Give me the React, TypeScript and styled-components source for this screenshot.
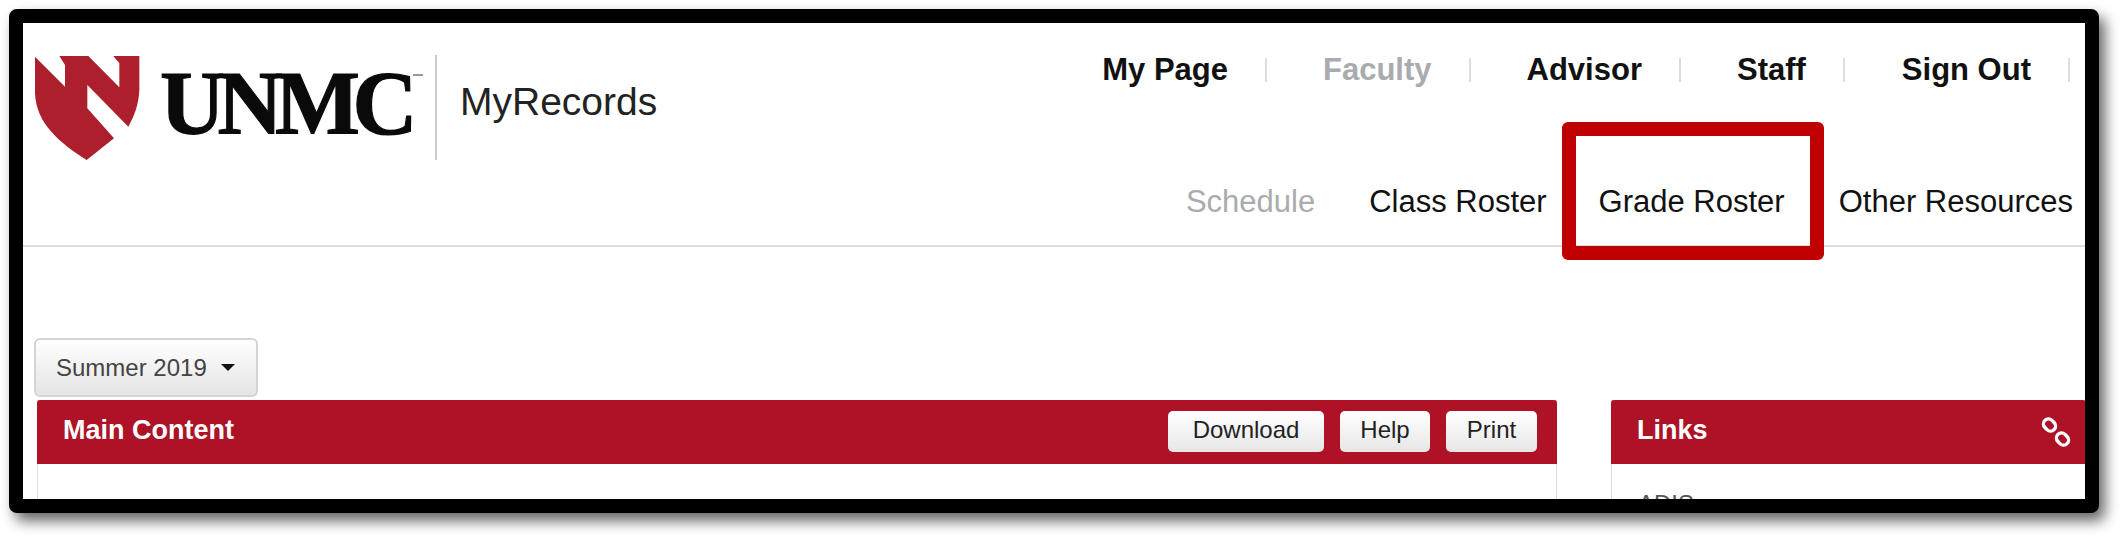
import React from 'react'
import styled, { createGlobalStyle } from 'styled-components'

const Global = createGlobalStyle`
  html, body {
    margin: 0;
    background: #fff;
    font-family: "Liberation Sans", Arial, sans-serif;
  }
`

const Page = styled.div`
  width: 2128px;
  height: 542px;
  padding: 9px 0 0 9px;
  box-sizing: border-box;
  overflow: hidden;
`

const Frame = styled.div`
  position: relative;
  width: 2090px;
  height: 504px;
  box-sizing: border-box;
  border: 14px solid #000;
  border-radius: 8px;
  box-shadow: 6px 8px 14px rgba(0, 0, 0, 0.6);
  background: #fff;
`

const Clip = styled.div`
  width: 100%;
  height: 100%;
  overflow: hidden;
`

const Header = styled.header`
  height: 222px;
  display: flex;
  justify-content: space-between;
  border-bottom: 2px solid #ddd;
`

const Brand = styled.div`
  display: flex;
  align-items: flex-start;
  padding: 27px 0 0 7px;
`

const Shield = styled.svg`
  width: 115px;
  height: 115px;
  flex: none;
`

const Wordmark = styled.div`
  font-family: "Liberation Serif", serif;
  font-weight: 700;
  font-size: 90px;
  line-height: 90px;
  letter-spacing: -7.5px;
  -webkit-text-stroke: 1.2px #0a0a0a;
  color: #0a0a0a;
  margin: 9px 0 0 15px;
  width: 252px;
`

const Tm = styled.span`
  display: inline-block;
  width: 10px;
  height: 2px;
  background: #999;
  margin: 24px 0 0 1px;
  flex: none;
`

const BrandDivider = styled.div`
  width: 2px;
  height: 105px;
  background: #ccc;
  margin: 5px 0 0 12px;
`

const AppName = styled.div`
  font-size: 39px;
  line-height: 40px;
  color: #222;
  margin: 32px 0 0 23px;
`

const Navs = styled.div`
  display: flex;
  flex-direction: column;
  align-items: flex-end;
`

const TopNav = styled.nav`
  display: flex;
  align-items: center;
  height: 32px;
  margin-top: 31px;
`

const TopLink = styled.a<{ $muted?: boolean }>`
  font-size: 31px;
  font-weight: 700;
  line-height: 32px;
  color: ${({ $muted }) => ($muted ? '#a9abae' : '#111')};
`

const TopSep = styled.span<{ $gap: number }>`
  width: 2px;
  height: 24px;
  background: #ddd;
  margin: 0 ${({ $gap }) => $gap}px 0 37px;
`

const SubNav = styled.nav`
  display: flex;
  align-items: center;
  height: 36px;
  margin: 98px 12px 0 0;
`

const SubLink = styled.a<{ $muted?: boolean; $gap: number }>`
  font-size: 31px;
  line-height: 36px;
  margin-left: ${({ $gap }) => $gap}px;
  color: ${({ $muted }) => ($muted ? '#a9abae' : '#111')};
`

const Highlight = styled.div`
  position: absolute;
  left: 1539px;
  top: 99px;
  width: 262px;
  height: 138px;
  box-sizing: border-box;
  border: 14px solid #c00000;
  border-radius: 6px;
`

const Body = styled.div`
  padding: 91px 0 0 11px;
`

const TermButton = styled.button`
  display: flex;
  align-items: center;
  width: 224px;
  height: 59px;
  padding: 0 0 0 20px;
  box-sizing: border-box;
  border: 2px solid #d4d4d4;
  border-radius: 6px;
  background: linear-gradient(#fff, #e4e4e4);
  font-family: inherit;
  font-size: 24px;
  color: #444;
`

const Caret = styled.span`
  margin-left: 14px;
  border: 7px solid transparent;
  border-top: 7px solid #111;
  border-bottom: 0;
`

const Columns = styled.div`
  display: flex;
  margin: 3px 0 0 3px;
`

const Panel = styled.section<{ $width: number; $gap?: number }>`
  flex: none;
  width: ${({ $width }) => $width}px;
  margin-left: ${({ $gap }) => $gap ?? 0}px;
  box-sizing: border-box;
  border-left: 1px solid #ddd;
  border-right: 1px solid #ddd;
  height: 200px;
`

const PanelHead = styled.div<{ $right: number }>`
  display: flex;
  align-items: center;
  justify-content: space-between;
  height: 64px;
  margin: 0 -1px;
  padding: 0 ${({ $right }) => $right}px 0 26px;
  box-sizing: border-box;
  background: #ae1227;
  border-radius: 3px 3px 0 0;
  color: #fff;
`

const PanelTitle = styled.h2`
  margin: 0 0 4px;
  font-size: 27px;
  font-weight: 700;
`

const Actions = styled.div`
  display: flex;
  gap: 16px;
  margin-bottom: 2px;
`

const ActionButton = styled.button<{ $width: number }>`
  width: ${({ $width }) => $width}px;
  height: 41px;
  padding: 0 0 2px;
  border: 0;
  border-radius: 5px;
  background: linear-gradient(#fff, #e6e6e6);
  font-family: inherit;
  font-size: 24px;
  color: #222;
`

const LinkItem = styled.div`
  font-size: 24px;
  line-height: 28px;
  color: #555;
  margin: 26px 0 0 26px;
`

const Chain = styled.svg`
  width: 30px;
  height: 30px;
  margin-bottom: 1px;
`

export default function App() {
  return (
    <Page>
      <Global />
      <Frame>
        <Clip>
          <Header>
            <Brand>
              <Shield viewBox="0 0 345 345">
                <path
                  fill="#ae1f2e"
                  d="M15 20 L105 110 L105 45 L88 18 L175 18 L268 112 L268 40 L250 18 L328 18 L328 120 C326 165 312 200 295 230 L172 105 L172 175 L252 265 L170 330 C90 280 18 220 15 130 Z"
                />
              </Shield>
              <Wordmark>UNMC</Wordmark>
              <Tm />
              <BrandDivider />
              <AppName>MyRecords</AppName>
            </Brand>
            <Navs>
              <TopNav>
                <TopLink>My Page</TopLink>
                <TopSep $gap={56} />
                <TopLink $muted>Faculty</TopLink>
                <TopSep $gap={56} />
                <TopLink>Advisor</TopLink>
                <TopSep $gap={56} />
                <TopLink>Staff</TopLink>
                <TopSep $gap={57} />
                <TopLink>Sign Out</TopLink>
                <TopSep $gap={15} />
              </TopNav>
              <SubNav>
                <SubLink $muted $gap={0}>Schedule</SubLink>
                <SubLink $gap={54}>Class Roster</SubLink>
                <SubLink $gap={52}>Grade Roster</SubLink>
                <SubLink $gap={54}>Other Resources</SubLink>
              </SubNav>
            </Navs>
          </Header>
          <Body>
            <TermButton>
              Summer 2019
              <Caret />
            </TermButton>
            <Columns>
              <Panel $width={1520}>
                <PanelHead $right={20}>
                  <PanelTitle>Main Content</PanelTitle>
                  <Actions>
                    <ActionButton $width={156}>Download</ActionButton>
                    <ActionButton $width={90}>Help</ActionButton>
                    <ActionButton $width={91}>Print</ActionButton>
                  </Actions>
                </PanelHead>
              </Panel>
              <Panel $width={475} $gap={54}>
                <PanelHead $right={15}>
                  <PanelTitle>Links</PanelTitle>
                  <Chain viewBox="0 0 30 30" fill="none" stroke="#fff" strokeWidth="3.4">
                    <rect x="2" y="3" width="13" height="10" rx="5" transform="rotate(45 8.5 8)" />
                    <rect x="15" y="17" width="13" height="10" rx="5" transform="rotate(45 21.5 22)" />
                  </Chain>
                </PanelHead>
                <LinkItem>ADIS</LinkItem>
              </Panel>
            </Columns>
          </Body>
        </Clip>
        <Highlight />
      </Frame>
    </Page>
  )
}
